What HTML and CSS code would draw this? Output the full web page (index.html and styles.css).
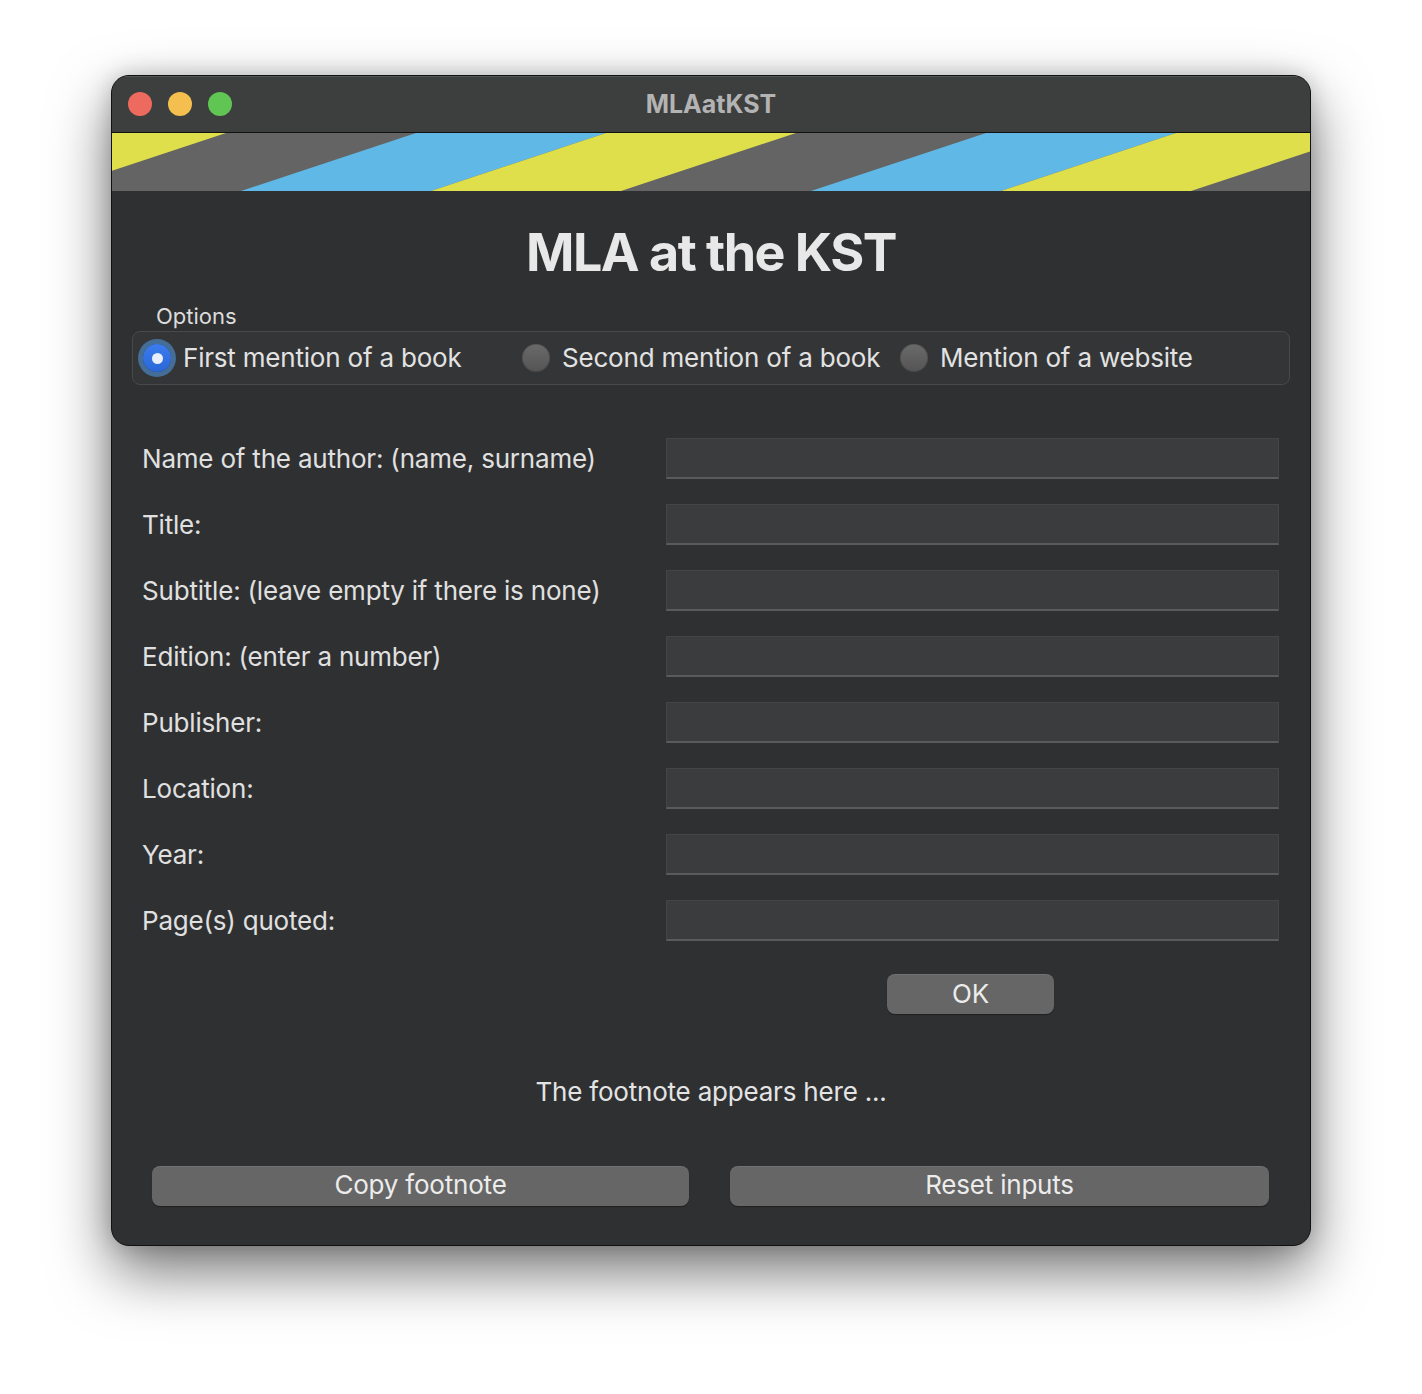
FILE: index.html
```html
<!DOCTYPE html>
<html>
<head>
<meta charset="utf-8">
<title>MLAatKST</title>
<link rel="stylesheet" href="styles.css">
</head>
<body>
<div class="window">
  <div class="titlebar">
    <div class="lights">
      <span class="light red"></span>
      <span class="light yellow"></span>
      <span class="light green"></span>
    </div>
    <div class="title">MLAatKST</div>
  </div>
  <div class="stripes">
    <svg viewBox="0 0 1198 58" preserveAspectRatio="none" width="1198" height="58">
      <rect x="0" y="0" width="1198" height="58" fill="#646464"/>
      <polygon points="-200,0 114,0 -61,58 -375,58" fill="#dfdf4b"/>
      <polygon points="304,0 494,0 319,58 129,58" fill="#5fb8e6"/>
      <polygon points="494,0 684,0 509,58 319,58" fill="#dfdf4b"/>
      <polygon points="874,0 1064,0 889,58 699,58" fill="#5fb8e6"/>
      <polygon points="1064,0 1254,0 1079,58 889,58" fill="#dfdf4b"/>
    </svg>
  </div>
  <div class="content">
    <h1 class="heading">MLA at the KST</h1>
    <div class="options-label">Options</div>
    <div class="group">
      <label class="radio-item">
        <span class="radio checked"><span class="dot"></span></span>
        <span class="radio-text">First mention of a book</span>
      </label>
      <label class="radio-item">
        <span class="radio"></span>
        <span class="radio-text">Second mention of a book</span>
      </label>
      <label class="radio-item">
        <span class="radio"></span>
        <span class="radio-text">Mention of a website</span>
      </label>
    </div>
    <div class="form">
      <div class="label">Name of the author: (name, surname)</div><div class="field"></div>
      <div class="label">Title:</div><div class="field"></div>
      <div class="label">Subtitle: (leave empty if there is none)</div><div class="field"></div>
      <div class="label">Edition: (enter a number)</div><div class="field"></div>
      <div class="label">Publisher:</div><div class="field"></div>
      <div class="label">Location:</div><div class="field"></div>
      <div class="label">Year:</div><div class="field"></div>
      <div class="label">Page(s) quoted:</div><div class="field"></div>
      <div></div>
      <div class="ok-cell"><div class="btn ok">OK</div></div>
    </div>
    <div class="footnote">The footnote appears here ...</div>
    <div class="bottom-buttons">
      <div class="btn wide">Copy footnote</div>
      <div class="btn wide">Reset inputs</div>
    </div>
  </div>
</div>
</body>
</html>
```

FILE: styles.css
```css
* { box-sizing: border-box; }
html, body { margin: 0; padding: 0; }
body {
  background: #ffffff;
  font-family: "Inter", "Noto Sans", sans-serif;
  width: 1422px;
  height: 1394px;
  overflow: hidden;
  padding: 75px 0 0 111px;
}
.window {
  width: 1200px;
  height: 1171px;
  border: 1px solid #111;
  border-radius: 18px;
  overflow: hidden;
  background: #2f3032;
  box-shadow: 0 25px 60px rgba(0,0,0,0.55), 0 0 22px rgba(0,0,0,0.18);
  display: flex;
  flex-direction: column;
}
.titlebar {
  height: 57px;
  background: #3d3e3e;
  border-bottom: 1px solid #111;
  border-top: 1px solid #555;
  display: flex;
  align-items: center;
  position: relative;
  flex: none;
}
.lights {
  display: flex;
  gap: 16px;
  padding-left: 16px;
  margin-top: -2px;
}
.light {
  width: 24px;
  height: 24px;
  border-radius: 50%;
  display: block;
}
.light.red { background: #ed6a5e; }
.light.yellow { background: #f4bf4f; }
.light.green { background: #61c554; }
.title {
  position: absolute;
  left: 0;
  right: 0;
  top: 12px;
  line-height: 30px;
  text-align: center;
  font-weight: 700;
  font-size: 25px;
  color: #b3b3b3;
  pointer-events: none;
}
.stripes {
  height: 58px;
  flex: none;
  line-height: 0;
}
.stripes svg { display: block; }
.content {
  flex: 1;
  padding: 0 20px;
  color: #dfdfdf;
  font-size: 26px;
  letter-spacing: -0.2px;
}
.heading {
  margin: 32px 0 0;
  text-align: center;
  font-size: 52px;
  letter-spacing: -1.5px;
  line-height: 60px;
  font-weight: 700;
  color: #e8e8e8;
}
.options-label {
  margin-top: 19px;
  padding-left: 24px;
  font-size: 22px;
  letter-spacing: 0;
  line-height: 28px;
  color: #dcdcdc;
}
.group {
  margin-top: 1px;
  height: 54px;
  border: 1px solid #48494a;
  border-radius: 8px;
  background: #343536;
  display: grid;
  grid-template-columns: 379px 378px 1fr;
  align-items: center;
  padding-left: 10px;
}
.radio-item {
  display: flex;
  align-items: center;
  gap: 12px;
}
.radio {
  width: 28px;
  height: 28px;
  border-radius: 50%;
  background: linear-gradient(#6a6a6a, #545454);
  box-shadow: inset 0 0 0 1px rgba(0,0,0,0.15);
  flex: none;
  display: flex;
  align-items: center;
  justify-content: center;
}
.radio.checked {
  background: linear-gradient(#3b7cf0, #2a66d6);
  box-shadow: 0 0 0 5px rgba(74,128,185,0.75);
}
.radio .dot {
  width: 11px;
  height: 11px;
  border-radius: 50%;
  background: #e8eefa;
}
.radio-text {
  line-height: 32px;
  color: #e2e2e2;
}
.form {
  margin-top: 53px;
  padding: 0 11px 0 10px;
  display: grid;
  grid-template-columns: 524px 1fr;
  grid-auto-rows: 41px;
  row-gap: 25px;
  align-items: center;
}
.label {
  color: #e0e0e0;
}
.field {
  height: 41px;
  background: #3b3c3d;
  border: 1px solid #444546;
  border-bottom: 2px solid #5a5b5c;
}
.ok-cell {
  display: flex;
  justify-content: center;
  margin-top: 15px;
}
.btn {
  background: #656665;
  border-radius: 8px;
  color: #ececec;
  text-align: center;
  box-shadow: 0 1px 1px rgba(0,0,0,0.35), inset 0 1px 0 rgba(255,255,255,0.08);
}
.ok {
  width: 167px;
  height: 40px;
  line-height: 40px;
  margin-left: -4px;
}
.footnote {
  margin-top: 68px;
  text-align: center;
  line-height: 34px;
  color: #e4e4e4;
}
.bottom-buttons {
  margin-top: 57px;
  padding: 0 20px;
  display: grid;
  grid-template-columns: 537px 539px;
  column-gap: 41px;
}
.wide {
  height: 40px;
  line-height: 38px;
}
```
